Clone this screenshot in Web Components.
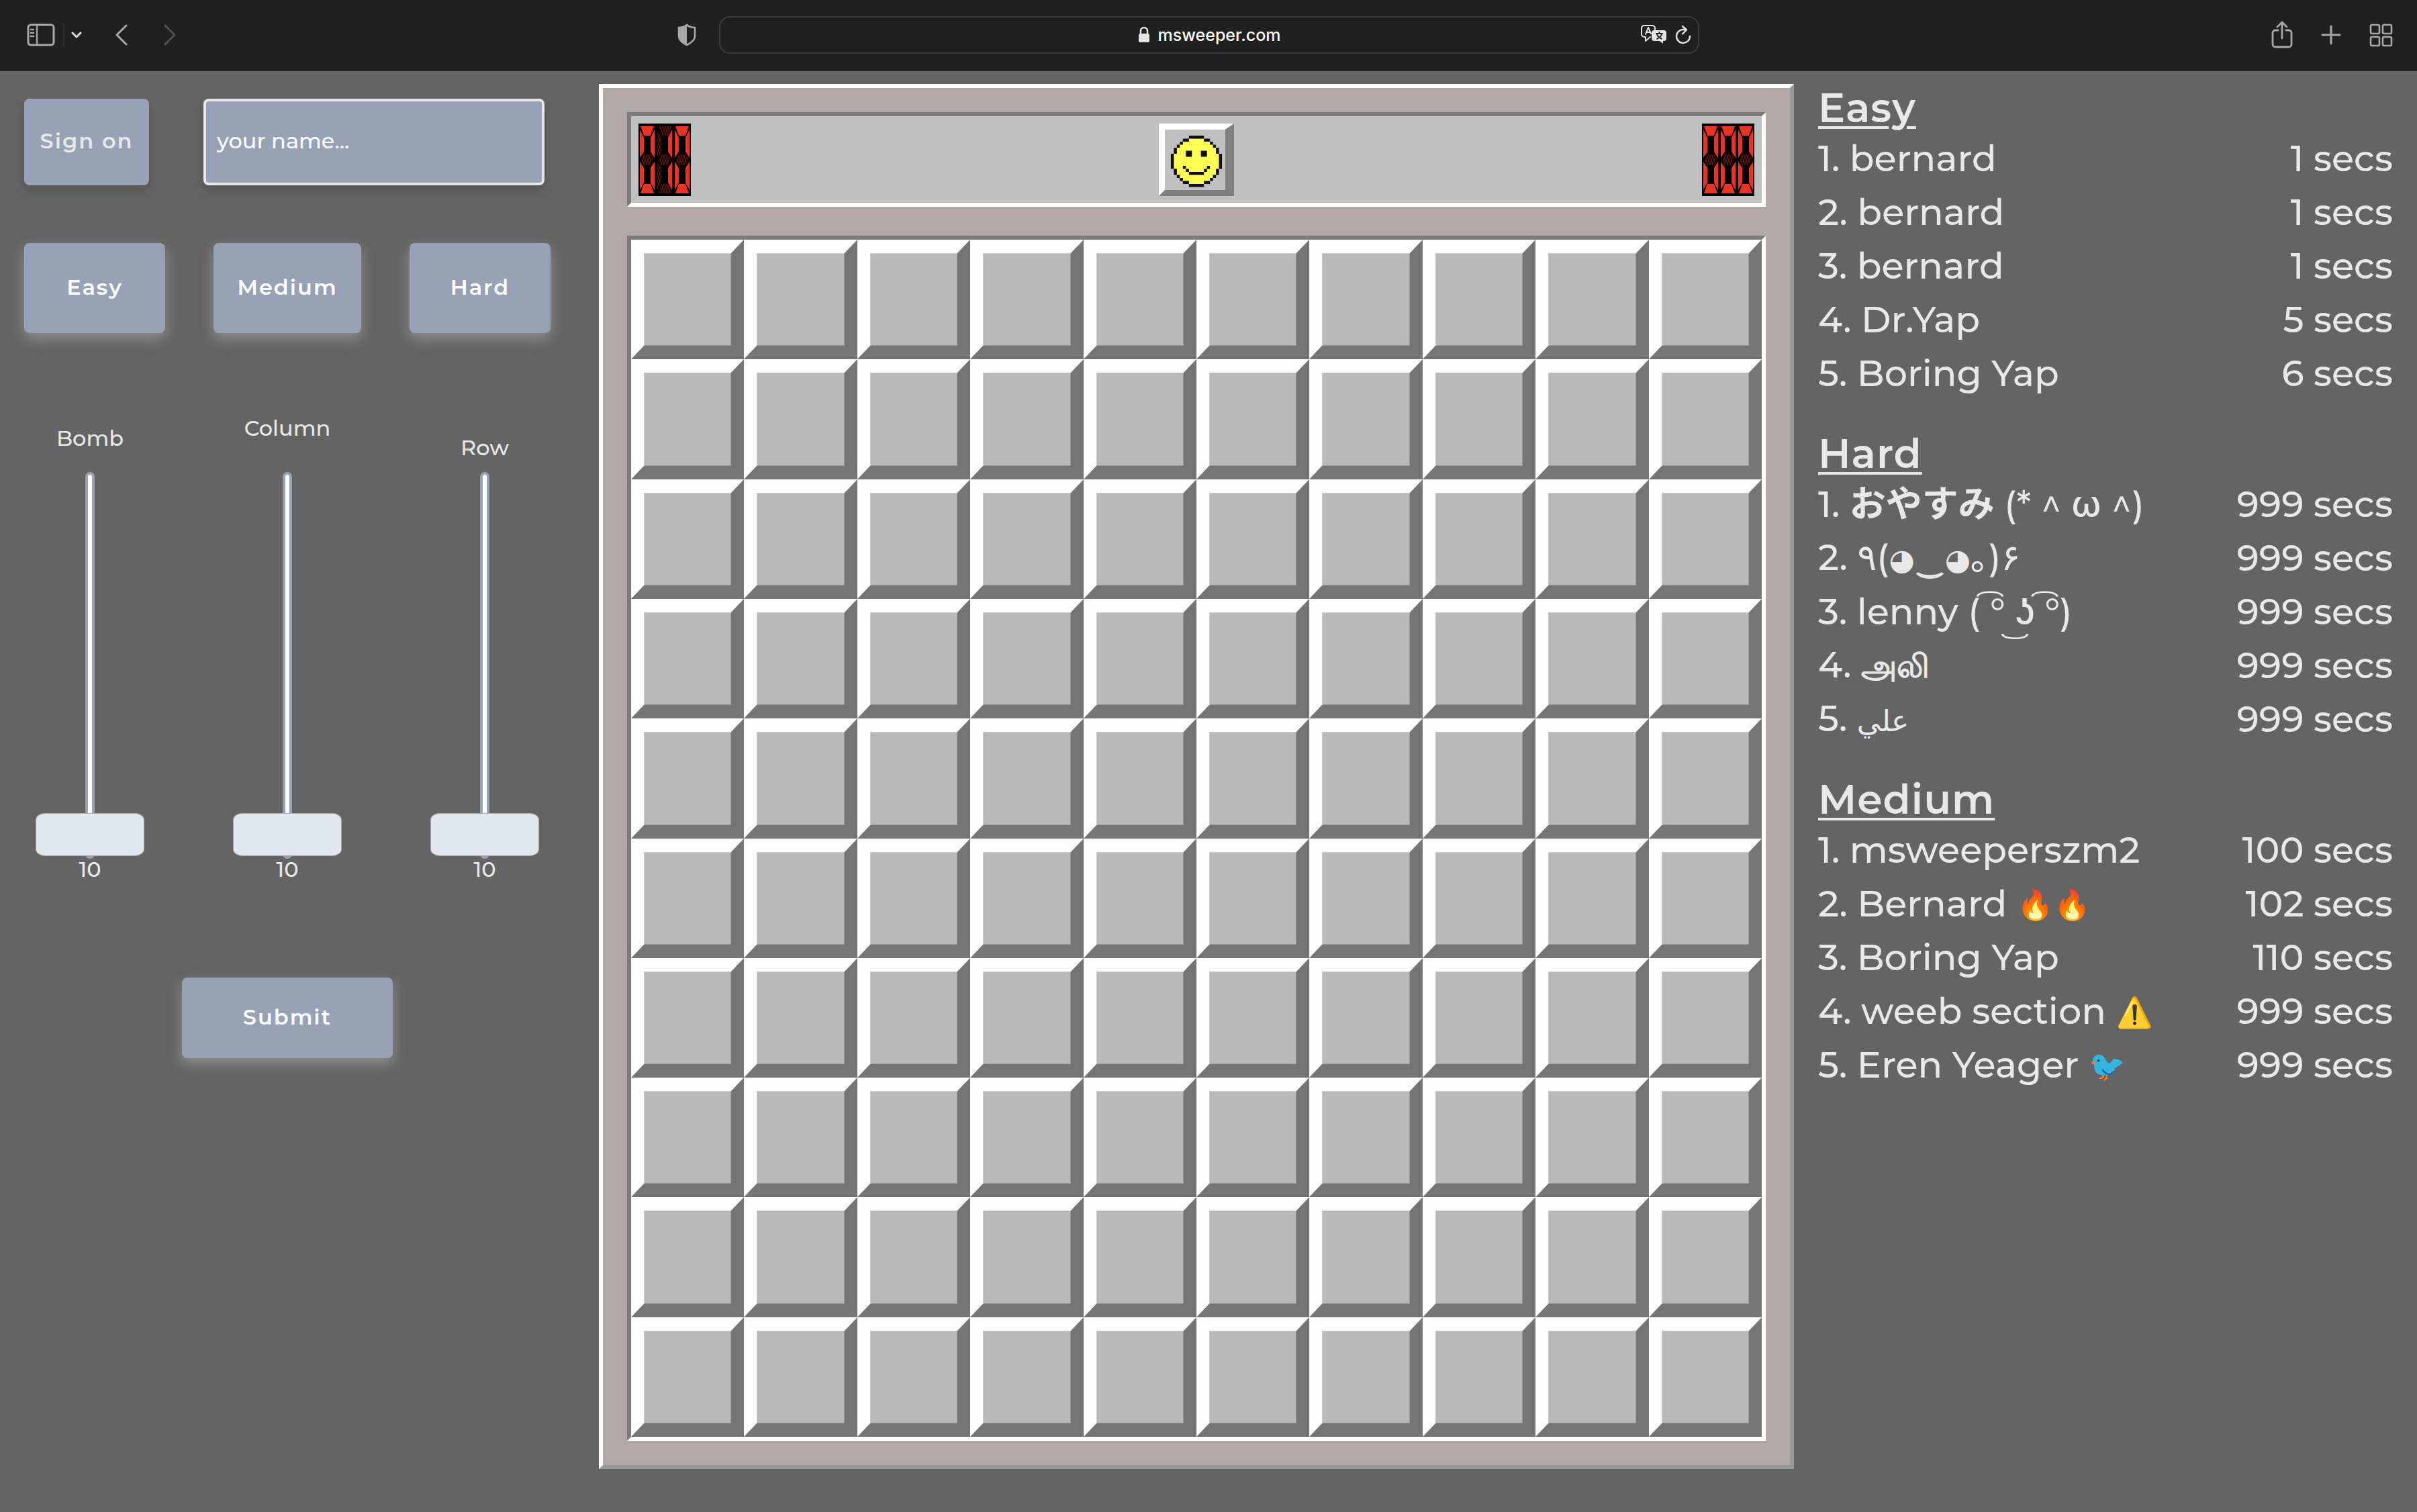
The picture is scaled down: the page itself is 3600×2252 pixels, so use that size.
<!DOCTYPE html>
<html lang="en">
<head>
<meta charset="utf-8">
<title>msweeper.com</title>
<style>
html, body { height: 100%; }
body { margin: 0; background: #646464; color: #e8e8e8; font: 500 32px/40px Montserrat, Inter, "Noto Sans CJK JP", "Noto Sans", "DejaVu Sans", sans-serif; }
</style>
</head>
<body>
<sweeper-app></sweeper-app>
<script>
const define = (name, html, setup) => {
  const template = document.createElement('template');
  template.innerHTML = '<style>*{box-sizing:border-box}button,input{font:inherit;color:inherit;margin:0}</style>' + html;
  customElements.define(name, class extends HTMLElement {
    constructor() {
      super();
      this.attachShadow({ mode: 'open' }).append(template.content.cloneNode(true));
    }
    connectedCallback() {
      if (setup && !this.ready) { this.ready = true; setup.call(this, this.shadowRoot); }
    }
  });
};

/* Browser toolbar */
define('browser-bar', `
<style>
:host { display: flex; align-items: center; height: 106px; padding: 0 36px 2px 38px; background: #202020; border-bottom: 1px solid #4a4a4a; box-shadow: inset 0 -1px #000; color: #a8a8a8; }
.side { flex: 1 1 0; display: flex; align-items: center; }
.side.end { justify-content: flex-end; gap: 38px; }
.shield { margin-left: auto; margin-right: 32px; }
button { display: flex; padding: 0; border: 0; background: none; }
svg { display: block; fill: none; stroke: currentColor; stroke-width: 3; stroke-linecap: round; stroke-linejoin: round; }
.menu { margin-left: 12px; padding: 0 0 0 10px; height: 36px; align-items: center; border-left: 2px solid #2e2e2e; color: #d8d8d8; }
.back { margin-left: 48px; }
.forward { margin-left: 50px; color: #505050; }
.address { flex: 0 1 1460px; display: flex; align-items: center; height: 56px; padding: 0 10px; border: 2px solid #3b3b3b; border-radius: 16px; color: #e4e4e4; }
.fill { flex: 1; display: flex; justify-content: flex-end; gap: 12px; align-items: center; }
label { display: flex; align-items: center; gap: 12px; }
input { field-sizing: content; border: 0; padding: 0; background: none; font: 500 25px/36px Inter, sans-serif; color: #fff; outline: 0; }
</style>
<div class="side">
  <button aria-label="Show sidebar"><svg width="44" height="36" viewBox="0 0 44 36"><rect x="4" y="3" width="38" height="30" rx="4"/><path d="M17 3v30M8 10h4M8 15h4M8 20h4" stroke-width="2.4"/></svg></button>
  <button class="menu" aria-label="Tab groups"><svg width="16" height="12" viewBox="0 0 16 12"><path d="M2 3l6 6 6-6"/></svg></button>
  <button class="back" aria-label="Back"><svg width="22" height="36" viewBox="0 0 22 36"><path d="M18 4L4 18l14 14"/></svg></button>
  <button class="forward" aria-label="Forward"><svg width="22" height="36" viewBox="0 0 22 36"><path d="M4 4l14 14L4 32"/></svg></button>
  <button class="shield" aria-label="Privacy report"><svg width="32" height="36" viewBox="0 0 32 36"><path d="M16 3c3 3 7 4 12 4v13c0 6-6 10-12 13C10 30 4 26 4 20V7c5 0 9-1 12-4z" stroke-width="2.6"/><path d="M16 3c-3 3-7 4-12 4v13c0 6 6 10 12 13z" fill="currentColor" stroke="none"/></svg></button>
</div>
<div class="address">
  <div class="fill"></div>
  <label><svg width="18" height="26" viewBox="0 0 18 26" aria-hidden="true"><rect x="1" y="11" width="16" height="13" rx="2" fill="currentColor" stroke="none"/><path d="M4 11V7a5 5 0 0 1 10 0v4" stroke-width="2.4"/></svg>
  <input aria-label="Address" value="msweeper.com"></label>
  <div class="fill">
    <button aria-label="Translate"><svg width="40" height="32" viewBox="0 0 40 32"><path d="M15 19l-7 6v-6H6a4 4 0 0 1-4-4V6a4 4 0 0 1 4-4h12a4 4 0 0 1 4 4v2" stroke-width="2"/><path d="M8 15L12 5l4 9M9 12h6" stroke-width="2"/><path d="M21 9h14a4 4 0 0 1 4 4v8a4 4 0 0 1-4 4h-1v4l-5-4h-8a4 4 0 0 1-4-4v-8a4 4 0 0 1 4-4z" fill="currentColor" stroke="none"/><path d="M24 14h9M28.500 12v2M25 15c1 4 4 5 7 7M32 15c-1 4-4 5-7 7" stroke="#202020" stroke-width="1.800"/></svg></button>
    <button aria-label="Reload"><svg width="24" height="30" viewBox="0 0 24 30"><path d="M15 7.500A10 10 0 1 0 22 17M11 2l6 5.500-6 6" stroke-width="2.400"/></svg></button>
  </div>
</div>
<div class="side end">
  <button aria-label="Share"><svg width="34" height="42" viewBox="0 0 34 42"><path d="M11 14H7a4 4 0 0 0-4 4v17a4 4 0 0 0 4 4h20a4 4 0 0 0 4-4V18a4 4 0 0 0-4-4h-4M17 26V3M10 9l7-7 7 7" stroke-width="2.800"/></svg></button>
  <button aria-label="New tab"><svg width="36" height="36" viewBox="0 0 36 36"><path d="M18 5v26M5 18h26"/></svg></button>
  <button aria-label="Tab overview"><svg width="36" height="36" viewBox="0 0 36 36"><path d="M5 3h9a2 2 0 0 1 2 2v9a2 2 0 0 1-2 2H5a2 2 0 0 1-2-2V5a2 2 0 0 1 2-2zM23 3h9a2 2 0 0 1 2 2v9a2 2 0 0 1-2 2h-9a2 2 0 0 1-2-2V5a2 2 0 0 1 2-2zM5 21h9a2 2 0 0 1 2 2v9a2 2 0 0 1-2 2H5a2 2 0 0 1-2-2v-9a2 2 0 0 1 2-2zM23 21h9a2 2 0 0 1 2 2v9a2 2 0 0 1-2 2h-9a2 2 0 0 1-2-2v-9a2 2 0 0 1 2-2z" stroke-width="2.600"/></svg></button>
</div>`);

/* Blue push button */
define('blue-button', `
<style>
:host { display: block; }
button { display: block; width: 100%; height: 100%; padding: 0 0 3px; border: 0; border-radius: 8px; background: #98a2b6; color: #fff; font-weight: 600; letter-spacing: 2px; box-shadow: 0 8px 20px rgba(190,190,190,.5); }
:host([muted]) button { color: #e8e8e8; box-shadow: 0 8px 16px rgba(0,0,0,.15); }
</style>
<button><slot></slot></button>`);

/* Vertical slider with its label above and its value below */
define('level-slider', `
<style>
:host { display: flex; flex-direction: column; align-items: center; width: 162px; }
label { margin-bottom: var(--label-gap, 30px); }
input { appearance: none; writing-mode: vertical-lr; direction: rtl; width: 162px; height: 576px; padding: 0; background: none; display: flex; align-items: center; justify-content: center; }
input::-webkit-slider-runnable-track { width: 14px; height: 576px; border: 4px solid #98a2b6; border-radius: 7px; background: #fff; }
input::-webkit-slider-thumb { appearance: none; width: 162px; height: 64px; margin-left: -78px; border: 1px solid #a8a8a8; border-radius: 14px / 10px; background: #e2e7ef; }
output { line-height: 32px; }
</style>
<label for="range"><slot></slot></label>
<input id="range" type="range" min="10" max="60" value="10">
<output for="range">10</output>`, function (root) {
  const input = root.querySelector('input');
  input.addEventListener('input', () => { root.querySelector('output').value = input.value; });
});

define('control-panel', `
<style>
:host { display: flex; flex-direction: column; padding: 41px 72px 0 36px; }
.sign { display: flex; gap: 81px; height: 129px; padding-right: 9px; }
.sign blue-button { width: 186px; }
.sign input { flex: 1; min-width: 0; padding: 0 16px 3px; border: 4px solid #e8e8e8; border-radius: 8px; background: #98a2b6; box-shadow: 0 8px 16px rgba(0,0,0,.15); }
.sign input::placeholder { color: #fff; opacity: 1; }
.presets { display: flex; justify-content: space-between; height: 134px; margin-top: 86px; }
.presets blue-button { width: 210px; }
.presets .wide { width: 220px; }
.sliders { display: flex; justify-content: space-between; align-items: flex-end; margin-top: 122px; padding: 0 17px; }
.submit { width: 314px; height: 120px; margin: 145px auto 0; }
</style>
<div class="sign"><blue-button muted>Sign on</blue-button><input aria-label="Your name" placeholder="your name..."></div>
<div class="presets"><blue-button>Easy</blue-button><blue-button class="wide">Medium</blue-button><blue-button>Hard</blue-button></div>
<div class="sliders">
  <level-slider>Bomb</level-slider>
  <level-slider style="--label-gap:45px">Column</level-slider>
  <level-slider style="--label-gap:16px">Row</level-slider>
</div>
<blue-button class="submit">Submit</blue-button>`);

/* Seven-segment counter: lit segments are solid, the others hatched */
define('led-counter', `
<style>
:host { display: flex; background: #000; }
svg { display: block; width: 26px; height: 108px; }
</style>`, function (root) {
  const shapes = {
    a: '3,4 23,4 18,18 8,18', b: '24,9 24,51 18,42 18,21', c: '24,57 24,99 18,88 18,66',
    d: '8,90 18,90 23,104 3,104', e: '2,57 8,66 8,88 2,99', f: '2,9 8,21 8,42 2,51',
    g: '4,54 8,46 18,46 22,54 18,62 8,62' };
  const lit = { 0: 'abcdef', 1: 'bc' };
  root.innerHTML += [...this.getAttribute('value')].map(digit => {
    const parts = Object.entries(shapes).map(([key, points]) =>
      `<polygon points="${points}" fill="${lit[digit].includes(key) ? '#ea3323' : 'url(#hatch)'}"/>`).join('');
    return `<svg viewBox="0 0 26 108" aria-hidden="true"><defs><pattern id="hatch" width="4" height="10" patternUnits="userSpaceOnUse"><path d="M0 0l4 10M4 0L0 10" stroke="#7a1a12" fill="none"/></pattern></defs><rect width="26" height="108"/>${parts}</svg>`;
  }).join('');
});

/* Pixel-art reset face: runs of [column, row, width, height] */
define('face-button', `
<style>
:host { display: block; width: 112px; height: 108px; }
button { display: block; width: 100%; height: 100%; padding: 0; border: 0; background: #c0c0c0; }
svg { display: block; width: 100%; height: 100%; }
</style>
<button aria-label="New game"><svg viewBox="0 0 25 24" preserveAspectRatio="none"></svg></button>`, function (root) {
  const outline = [[10,4,5,1],[8,5,2,1],[15,5,2,1],[7,6,1,1],[17,6,1,1],[6,7,1,1],[18,7,1,1],[5,8,1,2],[19,8,1,2],[4,10,1,5],[20,10,1,5],[5,15,1,2],[19,15,1,2],[6,17,1,1],[18,17,1,1],[7,18,1,1],[17,18,1,1],[8,19,2,1],[15,19,2,1],[10,20,5,1]];
  const features = [[9,9,2,2],[14,9,2,2],[8,14,1,1],[9,15,1,1],[10,16,5,1],[15,15,1,1],[16,14,1,1]];
  const skin = [[10,5,5,1],[8,6,9,1],[7,7,11,1],[6,8,13,2],[5,10,15,5],[6,15,13,2],[7,17,11,1],[8,18,9,1],[10,19,5,1]];
  const draw = (runs, fill) => `<g fill="${fill}">${runs.map(([x, y, w, h]) => `<rect x="${x}" y="${y}" width="${w}" height="${h}"/>`).join('')}</g>`;
  root.querySelector('svg').innerHTML =
    '<rect width="25" height="24" fill="#808080"/><path d="M0 24V0h25l-3 2v20H2z" fill="#fff"/><rect x="2" y="2" width="20" height="20" fill="#c0c0c0"/>' +
    draw(skin, '#ffff54') + draw(outline, '#111') + draw(features, '#111');
});

define('mine-field', `
<style>
:host { display: grid; grid-template-columns: repeat(10, 1fr); grid-auto-rows: 1fr; border: 6px solid; border-color: #7b7b7b #fff #fff #7b7b7b; }
button { min-width: 0; padding: 0; border: 20px solid; border-width: 20px 19px; border-color: #fdfdfd #757575 #757575 #fdfdfd; background: #b9b9b9; box-shadow: inset 1px 1px #cacaca, inset -1px -1px #999; border-radius: 0; }
</style>`, function (root) {
  for (let i = 0; i < 100; i++) {
    const cell = document.createElement('button');
    cell.setAttribute('aria-label', `Row ${Math.floor(i / 10) + 1}, column ${i % 10 + 1}`);
    root.append(cell);
  }
});

define('game-board', `
<style>
:host { display: flex; flex-direction: column; gap: 43px; margin: 19px 0 64px; padding: 36px; background: #b2a8a7; border: 6px solid; border-color: #fff #999 #999 #fff; }
header { display: flex; justify-content: space-between; align-items: center; height: 141px; padding: 0 11px; background: #c0c0c0; border: 6px solid; border-color: #7b7b7b #fff #fff #7b7b7b; }
mine-field { flex: 1; }
</style>
<header><led-counter value="010" role="img" aria-label="10 bombs left"></led-counter><face-button></face-button><led-counter value="000" role="img" aria-label="0 seconds"></led-counter></header>
<mine-field></mine-field>`);

define('score-table', `
<style>
:host { display: block; margin-bottom: 41px; }
h2 { margin: 0; padding-top: 4px; font-size: 60px; line-height: 70px; font-weight: 600; text-decoration: underline; text-decoration-thickness: 4px; text-underline-offset: 6px; letter-spacing: 1px; }
table { width: 100%; border-collapse: collapse; font-size: 54px; }
td { padding: 0; height: 80px; line-height: 0; white-space: nowrap; }
td:last-child { text-align: right; }
.kana { font-weight: 700; }
.emoji, .symbol, .arabic { font-size: 44px; }
.emoji { vertical-align: 2px; }
.tamil { font-size: 48px; font-weight: 600; }
</style>
<h2></h2><table><tbody></tbody></table>`, function (root) {
  /* Scripts that the main face lacks get a size and weight of their own */
  const scripts = [
    ['kana', /^\p{Script=Hiragana}+$/u], ['tamil', /^\p{Script=Tamil}+$/u],
    ['arabic', /^[\u0621-\u064a]+$/u], ['symbol', /^◕$/u], ['emoji', /^[\p{Emoji_Presentation}⚠\ufe0f]+$/u]];
  root.querySelector('h2').textContent = this.level;
  this.scores.forEach(([name, secs], i) => {
    const row = root.querySelector('tbody').insertRow();
    const cell = row.insertCell();
    cell.append(`${i + 1}. `);
    for (const run of name.split(/(\p{Script=Hiragana}+|\p{Script=Tamil}+|[\u0621-\u064a]+|◕|[\p{Emoji_Presentation}⚠\ufe0f]+)/u)) {
      const script = scripts.find(([, test]) => test.test(run));
      if (!script) { cell.append(run); continue; }
      const span = document.createElement('span');
      span.className = script[0];
      span.textContent = run;
      cell.append(span);
    }
    row.insertCell().textContent = `${secs} secs`;
  });
});

define('score-board', `
<style>:host { display: block; padding: 16px 36px 0; }</style>`, function (root) {
  const levels = {
    Easy: [['bernard', 1], ['bernard', 1], ['bernard', 1], ['Dr.Yap', 5], ['Boring Yap', 6]],
    Hard: [['おやすみ (* ^ ω ^)', 999], ['٩(◕‿◕｡)۶', 999], ['lenny ( ͡° ͜ʖ ͡°)', 999], ['அலி', 999], ['علي', 999]],
    Medium: [['msweeperszm2', 100], ['Bernard 🔥🔥', 102], ['Boring Yap', 110], ['weeb section ⚠️', 999], ['Eren Yeager 🐦', 999]]
  };
  for (const [level, scores] of Object.entries(levels)) {
    const table = document.createElement('score-table');
    Object.assign(table, { level, scores });
    root.append(table);
  }
});

define('sweeper-app', `
<style>
:host { display: flex; flex-direction: column; min-height: 100%; }
main { flex: 1; display: grid; grid-template-columns: minmax(0, 223fr) minmax(0, 445fr) minmax(0, 232fr); }
</style>
<browser-bar></browser-bar>
<main><control-panel></control-panel><game-board></game-board><score-board></score-board></main>`);
</script>
</body>
</html>
